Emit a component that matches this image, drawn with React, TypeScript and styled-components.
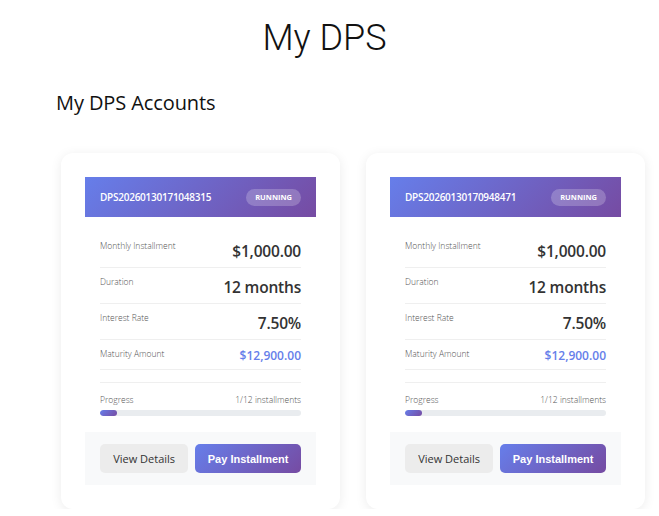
import React from "react";
import styled, { createGlobalStyle } from "styled-components";

interface DpsAccount {
  id: string;
  status: string;
  monthly: string;
  duration: string;
  rate: string;
  maturity: string;
  paid: number;
  total: number;
}

const accounts: DpsAccount[] = [
  {
    id: "DPS20260130171048315",
    status: "RUNNING",
    monthly: "$1,000.00",
    duration: "12 months",
    rate: "7.50%",
    maturity: "$12,900.00",
    paid: 1,
    total: 12,
  },
  {
    id: "DPS20260130170948471",
    status: "RUNNING",
    monthly: "$1,000.00",
    duration: "12 months",
    rate: "7.50%",
    maturity: "$12,900.00",
    paid: 1,
    total: 12,
  },
];

const GRADIENT = "linear-gradient(135deg, #667eea 0%, #764ba2 100%)";

const GlobalStyle = createGlobalStyle`
  body {
    margin: 0;
    background: #fff;
    font-family: "Open Sans", "Liberation Sans", sans-serif;
    color: #222;
  }
`;

const PageStyled = styled.div`
  padding-top: 16px;
`;

const TitleStyled = styled.h1`
  margin: 0;
  padding-right: 10px;
  text-align: center;
  font-family: Roboto, "Liberation Sans", sans-serif;
  font-weight: 300;
  font-size: 36px;
  line-height: 44px;
  color: #111;
`;

const SubTitleStyled = styled.h2`
  margin: 30px 0 0 56px;
  font-family: "Open Sans", "Liberation Sans", sans-serif;
  font-weight: 400;
  font-size: 20px;
  line-height: 26px;
  letter-spacing: -0.1px;
  color: #111;
`;

const GridStyled = styled.div`
  display: grid;
  grid-template-columns: 1fr 1fr;
  gap: 26px;
  margin: 37px 14px 0 61px;
`;

const CardStyled = styled.div`
  background: #fff;
  border-radius: 12px;
  padding: 24px;
  box-shadow: 0 2px 12px rgba(0, 0, 0, 0.08);
`;

const CardHeadStyled = styled.div`
  height: 40px;
  padding: 0 15px;
  display: flex;
  align-items: center;
  justify-content: space-between;
  background: ${GRADIENT};
  color: #fff;
`;

const AccountIdStyled = styled.span`
  font-size: 10px;
  font-weight: 600;
  letter-spacing: -0.25px;
`;

const BadgeStyled = styled.span`
  padding: 0 9px;
  height: 17px;
  line-height: 17px;
  border-radius: 9px;
  background: rgba(255, 255, 255, 0.22);
  font-size: 7.5px;
  font-weight: 700;
`;

const CardBodyStyled = styled.div`
  padding: 15px 15px 16px;
`;

const RowStyled = styled.div`
  display: flex;
  justify-content: space-between;
  align-items: flex-start;
  padding: 7px 0 4px;
  border-bottom: 1px solid #efefef;
`;

const LabelStyled = styled.span`
  font-size: 8.5px;
  line-height: 13.5px;
  font-weight: 300;
  color: #555;
`;

const ValueStyled = styled.span<{ $accent?: boolean }>`
  font-size: ${(p) => (p.$accent ? "12px" : "15.5px")};
  line-height: ${(p) => (p.$accent ? "18px" : "24px")};
  font-weight: 600;
  letter-spacing: ${(p) => (p.$accent ? "0" : "-0.2px")};
  color: ${(p) => (p.$accent ? "#667eea" : "#333")};
`;

const ProgressStyled = styled.div`
  margin-top: 12px;
  padding-top: 10px;
  border-top: 1px solid #efefef;
`;

const ProgressTopStyled = styled.div`
  display: flex;
  justify-content: space-between;
  font-size: 8.5px;
  line-height: 13px;
  font-weight: 300;
  color: #555;
`;

const TrackStyled = styled.div`
  margin-top: 4px;
  height: 6px;
  border-radius: 3px;
  background: #e9ecef;
  overflow: hidden;
`;

const FillStyled = styled.div`
  height: 100%;
  border-radius: 3px;
  background: ${GRADIENT};
`;

const CardFootStyled = styled.div`
  display: flex;
  gap: 7px;
  padding: 12px 15px;
  background: #f8f9fa;
`;

const ButtonStyled = styled.button<{ $primary?: boolean }>`
  flex: ${(p) => (p.$primary ? "107" : "87")};
  height: 29px;
  border: none;
  border-radius: 5px;
  cursor: pointer;
  font-size: 11px;
  font-family: ${(p) =>
    p.$primary ? '"Liberation Sans", Arial, sans-serif' : '"Open Sans", sans-serif'};
  font-weight: ${(p) => (p.$primary ? 700 : 500)};
  color: ${(p) => (p.$primary ? "#fff" : "#333")};
  background: ${(p) => (p.$primary ? GRADIENT : "#ececec")};
`;

const DpsCard: React.FC<{ account: DpsAccount }> = ({ account }) => {
  const pct = (account.paid / account.total) * 100;
  return (
    <CardStyled>
      <CardHeadStyled>
        <AccountIdStyled>{account.id}</AccountIdStyled>
        <BadgeStyled>{account.status}</BadgeStyled>
      </CardHeadStyled>
      <CardBodyStyled>
        <RowStyled>
          <LabelStyled>Monthly Installment</LabelStyled>
          <ValueStyled>{account.monthly}</ValueStyled>
        </RowStyled>
        <RowStyled>
          <LabelStyled>Duration</LabelStyled>
          <ValueStyled>{account.duration}</ValueStyled>
        </RowStyled>
        <RowStyled>
          <LabelStyled>Interest Rate</LabelStyled>
          <ValueStyled>{account.rate}</ValueStyled>
        </RowStyled>
        <RowStyled>
          <LabelStyled>Maturity Amount</LabelStyled>
          <ValueStyled $accent>{account.maturity}</ValueStyled>
        </RowStyled>
        <ProgressStyled>
          <ProgressTopStyled>
            <span>Progress</span>
            <span>
              {account.paid}/{account.total} installments
            </span>
          </ProgressTopStyled>
          <TrackStyled>
            <FillStyled style={{ width: `${pct}%` }} />
          </TrackStyled>
        </ProgressStyled>
      </CardBodyStyled>
      <CardFootStyled>
        <ButtonStyled>View Details</ButtonStyled>
        <ButtonStyled $primary>Pay Installment</ButtonStyled>
      </CardFootStyled>
    </CardStyled>
  );
};

export default function App() {
  return (
    <PageStyled>
      <GlobalStyle />
      <TitleStyled>My DPS</TitleStyled>
      <SubTitleStyled>My DPS Accounts</SubTitleStyled>
      <GridStyled>
        {accounts.map((a) => (
          <DpsCard key={a.id} account={a} />
        ))}
      </GridStyled>
    </PageStyled>
  );
}
